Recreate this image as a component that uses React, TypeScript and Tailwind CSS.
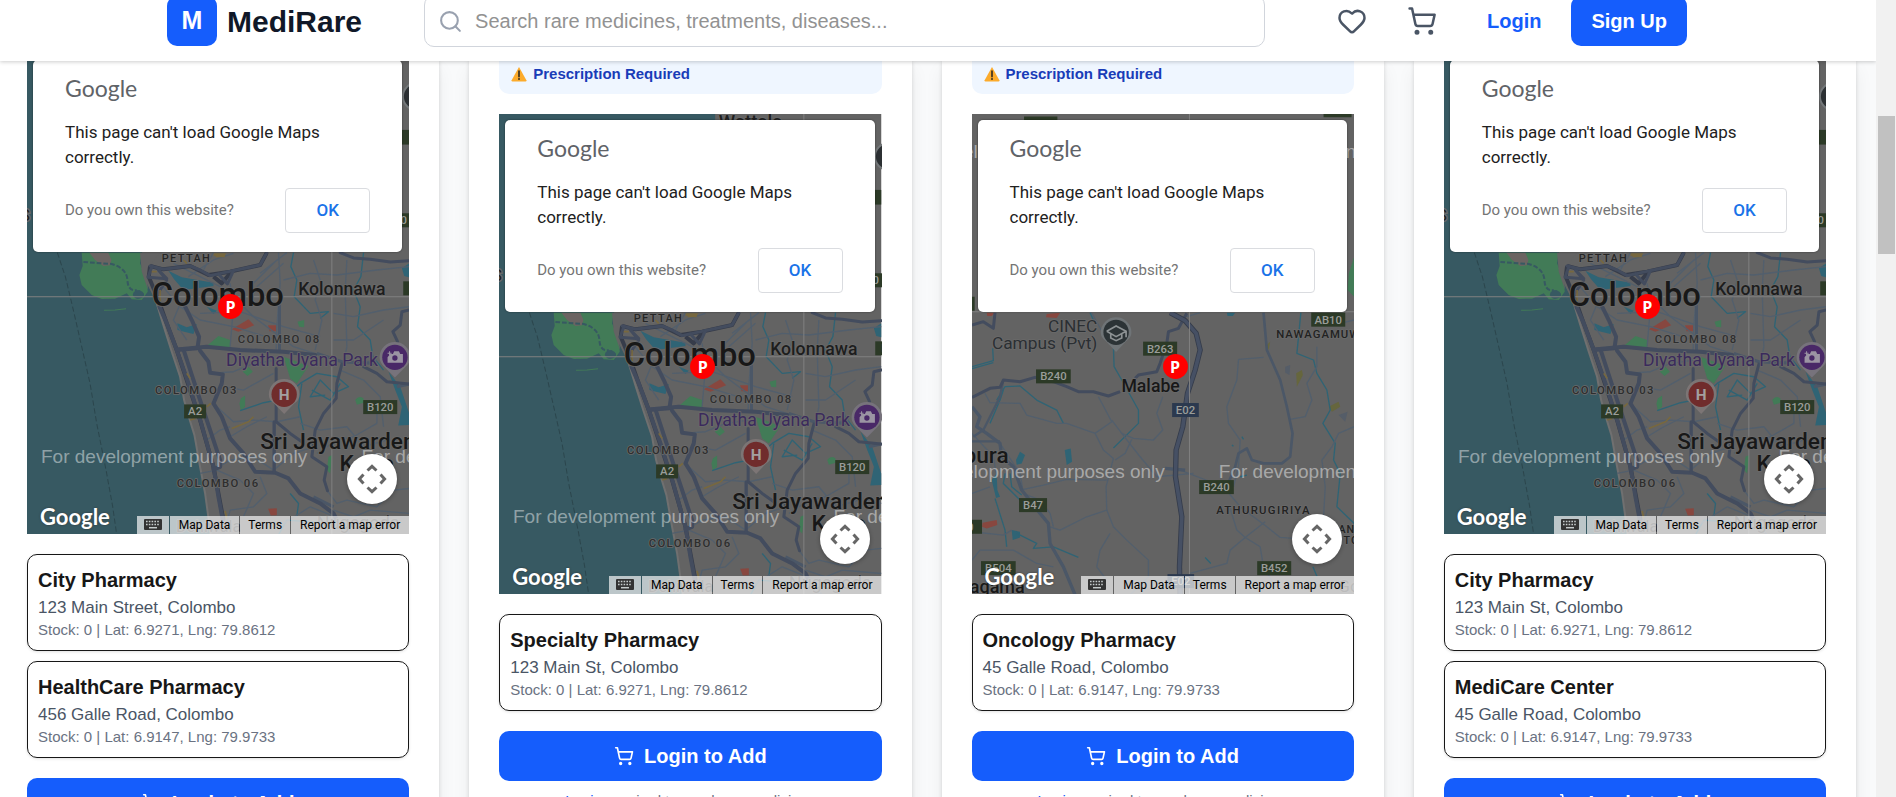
import React from "react";
import { Heart, Search, ShoppingCart } from "lucide-react";

type Pharmacy = {
  name: string;
  address: string;
  lat: string;
  lng: string;
};

type Medicine = {
  id: string;
  region: "colombo" | "malabe";
  prescription: boolean;
  pharmacies: Pharmacy[];
};

const medicines: Medicine[] = [
  {
    id: "m1",
    region: "colombo",
    prescription: false,
    pharmacies: [
      { name: "City Pharmacy", address: "123 Main Street, Colombo", lat: "6.9271", lng: "79.8612" },
      { name: "HealthCare Pharmacy", address: "456 Galle Road, Colombo", lat: "6.9147", lng: "79.9733" },
    ],
  },
  {
    id: "m2",
    region: "colombo",
    prescription: true,
    pharmacies: [{ name: "Specialty Pharmacy", address: "123 Main St, Colombo", lat: "6.9271", lng: "79.8612" }],
  },
  {
    id: "m3",
    region: "malabe",
    prescription: true,
    pharmacies: [{ name: "Oncology Pharmacy", address: "45 Galle Road, Colombo", lat: "6.9147", lng: "79.9733" }],
  },
  {
    id: "m4",
    region: "colombo",
    prescription: false,
    pharmacies: [
      { name: "City Pharmacy", address: "123 Main St, Colombo", lat: "6.9271", lng: "79.8612" },
      { name: "MediCare Center", address: "45 Galle Road, Colombo", lat: "6.9147", lng: "79.9733" },
    ],
  },
];

function Header() {
  return (
    <header className="relative z-10 h-[61px] shrink-0 overflow-visible bg-white pr-[22px] shadow-[0_1px_4px_rgba(0,0,0,0.2)]">
      <div className="mx-auto -mt-[19px] flex h-20 max-w-[1600px] items-center justify-between gap-[62px] px-10">
        <a href="#home" className="flex items-center gap-[10px]">
          <span className="flex size-[50px] items-center justify-center rounded-[10px] bg-[#155dfc] text-[25px] font-bold text-white">
            M
          </span>
          <span className="text-[30px] font-bold text-[#101828]">MediRare</span>
        </a>
        <label className="flex h-[52px] flex-1 items-center gap-[12px] rounded-[10px] border border-[#d1d5dc] bg-white px-[13px]">
          <Search className="size-[25px] shrink-0 text-[#99a1af]" />
          <input
            type="search"
            aria-label="Search"
            placeholder="Search rare medicines, treatments, diseases..."
            className="w-full bg-transparent text-[20px] outline-none placeholder:text-[#929292]"
          />
        </label>
        <nav className="flex items-center gap-5">
          <button type="button" aria-label="Wishlist" className="p-[10px] text-[#4a5565]">
            <Heart className="size-[30px]" />
          </button>
          <button type="button" aria-label="Cart" className="p-[10px] text-[#4a5565]">
            <ShoppingCart className="size-[30px]" />
          </button>
          <div className="flex items-center gap-[10px]">
            <a href="#login" className="px-5 text-[20px] font-bold text-[#155dfc]">
              Login
            </a>
            <a
              href="#signup"
              className="flex h-[50px] items-center rounded-[10px] bg-[#155dfc] px-5 text-[20px] font-bold text-white"
            >
              Sign Up
            </a>
          </div>
        </nav>
      </div>
    </header>
  );
}

type LabelProps = {
  x: number;
  y: number;
  size: number;
  children: string;
  fill?: string;
  weight?: number;
  spacing?: number;
  anchor?: "start" | "middle" | "end";
};

function MapLabel({ x, y, size, children, fill = "#181818", weight = 500, spacing = 0, anchor = "start" }: LabelProps) {
  return (
    <text
      x={x}
      y={y}
      fontSize={size}
      fontWeight={weight}
      fill={fill}
      textAnchor={anchor}
      letterSpacing={spacing}
      stroke="#6a6a6a"
      strokeWidth={5}
      strokeLinejoin="round"
      paintOrder="stroke"
    >
      {children}
    </text>
  );
}

function RoadSign({ x, y, w, label, fill = "#2c3a27" }: { x: number; y: number; w: number; label: string; fill?: string }) {
  return (
    <g>
      <rect x={x} y={y} width={w} height={42} fill={fill} />
      <text x={x + w / 2} y={y + 33} fontSize={34} fontWeight={500} fill="#9a9d99" textAnchor="middle">
        {label}
      </text>
    </g>
  );
}

function Watermark({ x, y }: { x: number; y: number }) {
  return (
    <text x={x} y={y} fontSize={57} fill="#ffffff" fillOpacity={0.46} className="font-['Liberation_Sans',sans-serif]">
      For development purposes only
    </text>
  );
}

function ColomboMap() {
  return (
    <>
      <rect width="382" height="480" fill="#636363" />
      <g transform="translate(-27,186) scale(0.33333)">
        <path d="M81-558H729V-520L600-300L470-60L425 40L440 130L470 190L492 262L515 335L540 410L552 480L566 530L583 585L598 670L615 760L632 884H81Z" fill="#375962" />
        <path d="M470 190L492 262L515 335L540 410L552 480L566 530L583 585L598 670L615 760L632 884" fill="none" stroke="#707070" strokeWidth="6" />
        <path d="M245 38L248 78L238 105L245 135L275 165L305 177L345 176L380 160L395 178L425 180L443 155L440 120L420 70L425 38Z" fill="#427b57" />
        <path d="M268 38L285 60L310 78L330 76L334 60L325 38Z" fill="#6b6462" />
        <path d="M420 38H480L450 75L440 110L444 150L425 95Z" fill="#636363" />
        <path d="M250 66L335 72Q380 85 382 120T410 150" fill="none" stroke="#375962" strokeWidth="6" strokeDasharray="14 6" />
        <path d="M398 165Q400 150 418 150Q440 160 428 172Q408 184 398 165" fill="#375962" />
        <path d="M312 211L345 210L378 206" fill="none" stroke="#427b57" strokeWidth="3" />
        <path d="M172 38L196 110L220 210L245 320L270 430L290 550L318 690L338 800L350 884" fill="none" stroke="#2c464d" strokeWidth="3" strokeDasharray="16 8" />

        <g fill="#2f6475">
          <path d="M505 92L545 112L640 128L640 138L550 150L522 118Z" />
          <path d="M532 250L560 262L590 252L580 282L555 276L532 270Z" />
          <path d="M1205 85L1227 70V112L1212 108Z" />
          <path d="M1165 395L1200 440L1227 520V555L1194 556L1205 500L1185 450Z" />
          <path d="M620 200L650 212L640 222Z" />
        </g>
        <g fill="#427b57">
          <path d="M620 318L655 288L690 300V325Z" />
          <path d="M850 350L925 378L890 430L870 415Z" />
          <path d="M892 245L912 240V262L897 260Z" />
          <path d="M728 395L745 380L758 395L742 408Z" />
          <path d="M722 475L735 466L735 500L722 512L718 490Z" />
          <path d="M1065 480Q1075 465 1090 475V488L1070 494Z" />
          <path d="M985 650L996 645L990 700L980 690Z" />
        </g>
        <g fill="#88473f">
          <path d="M695 268L745 238L762 256L715 275Z" />
          <path d="M804 256H828V274H808Z" />
          <path d="M804 806L830 804V825L812 826Z" />
        </g>

        <g fill="none" stroke="#2f6475" strokeWidth="4" strokeLinejoin="round">
          <path d="M880 38L872 80L890 120L882 170L930 220L985 215L960 235" />
          <path d="M1090 38L1082 110L1060 150L1080 200L1072 260L1110 300L1118 350L1150 390" />
          <path d="M845 480L900 430L950 400L1010 410L1045 440L1000 460L960 420L930 470L975 465" />
          <path d="M905 430L895 500L910 570" />
          <path d="M935 450L990 480L1020 430" />
          <path d="M720 512L790 488L830 480" />
          <path d="M870 760L895 790L890 828" />
          <path d="M835 884L860 840L1000 850" />
        </g>
        <g fill="none" stroke="#525f6d" strokeWidth="4" strokeLinejoin="round">
          <path d="M520 70L600 110L680 150L760 230L880 320L960 345" />
          <path d="M565 110L640 60L700 40M640 38L610 90M760 130L830 60M770 140L850 70M780 100L860 38" />
          <path d="M480 130L540 200L600 240L700 260L830 300" />
          <path d="M545 180L520 240L560 300" />
          <path d="M690 130L700 200L690 320" />
          <path d="M600 220L720 215L850 260L960 290" />
          <path d="M835 38L840 130L830 260L828 330" />
          <path d="M850 120L930 100L1010 105L1130 90L1227 80" />
          <path d="M940 60L960 120L945 180L965 240L945 330" />
          <path d="M1000 220L1060 230L1150 210L1227 200" />
          <path d="M1040 60L1035 150L1040 320L1030 370" />
          <path d="M630 400L700 395L760 370L830 360" />
          <path d="M670 440L730 450L820 400" />
          <path d="M650 500L700 545L760 540L830 545L900 530" />
          <path d="M690 590L740 560L800 530" />
          <path d="M640 690L690 660L760 650L820 690L880 640L940 620" />
          <path d="M620 600L660 570L690 560" />
          <path d="M600 700L650 690L720 720L760 760L730 830" />
          <path d="M780 710L800 760L760 800L690 810L670 884" />
          <path d="M900 550L960 570L1040 560L1090 620L1160 600L1227 610" />
          <path d="M950 640L1010 600L1060 590L1130 550L1130 500" />
          <path d="M1020 390L1090 420L1140 470L1150 560" />
          <path d="M1000 810L1060 830L1110 810L1227 820" />
          <path d="M980 750L1010 790L1040 780L1130 800L1180 750L1227 745" />
          <path d="M850 850L930 800L1000 828L1050 884" />
          <path d="M1150 240L1060 300L1000 300" />
          <path d="M960 350L1060 370L1130 360" />
        </g>
        <g fill="none" stroke="#4b5767" strokeWidth="9" strokeLinejoin="round">
          <path d="M838 170V330" />
          <path d="M822 545V695" />
          <path d="M950 340L1025 365L1130 370" />
          <path d="M1190 440L1227 432" />
          <path d="M940 770L1000 800" />
        </g>
        <g fill="none" stroke="#363c4a" strokeWidth="12" strokeLinejoin="round">
          <path d="M450 78L490 88L570 78L625 105L690 95L780 75L800 38" />
          <path d="M450 78L446 110L475 180L500 250L530 330L560 420L600 540L640 680L670 840" />
          <path d="M640 110L665 130L690 100" />
        </g>
        <g fill="none" stroke="#434c5e" strokeWidth="9" strokeLinejoin="round" strokeLinecap="round">
          <path d="M1020 38L1060 54L1110 58L1170 66L1227 62" />
          <path d="M450 78L490 88L570 78L600 90L630 107L700 92L780 75L800 38" />
          <path d="M456 78L444 112L500 116L475 90L500 120L470 165" />
          <path d="M655 102L682 132L700 92" />
          <path d="M478 200L500 250L530 330L565 430L602 545L640 680L655 770L668 840" strokeWidth="12" />
          <path d="M553 195L575 240L597 290L592 325L530 330" strokeWidth="12" />
          <path d="M550 328L590 450L625 555L660 660L660 680L640 688" strokeWidth="12" />
          <path d="M530 328L620 320L720 330L850 335L945 345" strokeWidth="12" />
          <path d="M600 332L625 365L630 398L668 403L665 430L640 490L665 530L690 595L730 640L765 695L825 698L865 715L900 760L960 790L1000 820L1010 840" strokeWidth="12" />
          <path d="M828 385V545L870 580L905 605" />
          <path d="M822 545V695" />
          <path d="M1025 372L1010 430L1008 475L970 520L945 570L940 610L935 650L980 680L972 720L982 752" />
          <path d="M1227 210L1205 215L1200 255L1178 275L1192 305" />
          <path d="M1090 380L1130 400L1160 425L1227 432" />
        </g>
        <g fill="none" stroke="#77683f" strokeWidth="5">
          <path d="M640 45L675 48M480 150V185M560 400L570 415M620 500L632 490M695 565L745 545L760 530M570 540L585 535M675 812L680 835" />
          <path d="M455 95H470M550 60L560 70" />
        </g>
        <path d="M640 40L678 40L672 52L648 52Z" fill="#77683f" />
        <path d="M81 170H1227M995-558V884" stroke="#818181" strokeWidth="3" />

        <MapLabel x={485} y={67} size={33} spacing={4} fill="#262626">PETTAH</MapLabel>
        <MapLabel x={455} y={197} size={98}>Colombo</MapLabel>
        <MapLabel x={894} y={165} size={53} fill="#1d1d1d">Kolonnawa</MapLabel>
        <MapLabel x={713} y={309} size={34} spacing={4} fill="#2e2e2e">COLOMBO 08</MapLabel>
        <MapLabel x={465} y={461} size={34} spacing={4} fill="#2e2e2e">COLOMBO 03</MapLabel>
        <MapLabel x={530} y={742} size={34} spacing={4} fill="#2e2e2e">COLOMBO 06</MapLabel>
        <MapLabel x={678} y={377} size={53} weight={400} fill="#3b2a5c">Diyatha Uyana Park</MapLabel>
        <MapLabel x={780} y={627} size={68}>Sri Jayawardenepura</MapLabel>
        <MapLabel x={1018} y={694} size={68}>Kotte</MapLabel>
        <MapLabel x={528} y={876} size={48} weight={400} fill="#333333">Dehiwala</MapLabel>
        <MapLabel x={950} y={866} size={54} weight={400} fill="#333333">Nugegoda</MapLabel>
        <MapLabel x={740} y={-516} size={56} fill="#202020">Wattala</MapLabel>
        <RoadSign x={552} y={493} w={66} label="A2" />
        <RoadSign x={1089} y={480} w={102} label="B120" />
        <RoadSign x={1209} y={124} w={60} label="D" />
        <RoadSign x={1160} y={-80} w={80} label="B0" />
        <path d="M1205-330H1227V-286H1205Z" fill="#2c3a27" />

        <path d="M852 522L822 490Q806 480 806 463A46 46 0 0 1 898 463Q898 480 882 490Z" fill="#7c7575" />
        <circle cx="852" cy="463" r="38" fill="#702c2c" />
        <text x="852" y="480" fontSize="46" fontWeight="700" textAnchor="middle" fill="#a3a0a0">
          H
        </text>
        <path d="M1184 412L1152 380Q1138 368 1138 352A46 46 0 0 1 1230 352Q1230 368 1216 380Z" fill="#77737c" />
        <circle cx="1184" cy="352" r="38" fill="#492867" />
        <path d="M1170 342H1178L1182 334H1196L1200 342H1208V368H1162V352" fill="#9b94a3" />
        <circle cx="1184" cy="354" r="8" fill="#492867" />
        <path d="M1162 340H1174M1168 334V346" stroke="#9b94a3" strokeWidth="3" />
        <circle cx="1248" cy="-430" r="40" fill="#2c3033" stroke="#74787a" strokeWidth="6" />
        <text x="60" y="-58" fontSize="50" fill="#202020" stroke="#6a6a6a" strokeWidth="8" paintOrder="stroke">
          S
        </text>
      </g>
      <g transform="translate(-27,186) scale(0.33333)">
        <Watermark x={123} y={670} />
        <Watermark x={1084} y={670} />
      </g>
    </>
  );
}

function MalabeMap() {
  return (
    <>
      <rect width="382" height="480" fill="#636363" />
      <g transform="translate(-32,186) scale(0.33333)">
        <g fill="#2f6475">
          <path d="M374 450L392 445L396 485L380 495Z" />
          <path d="M155 540L170 520L172 570L180 590L168 594Z" />
          <path d="M215 690L240 695L240 712L218 720Z" />
          <path d="M860 38H885L878 48H862Z" />
          <path d="M228 480L240 455L255 465L245 490L230 494Z" />
        </g>
        <g fill="#66663d">
          <path d="M1068 220L1085 210L1088 225L1070 260Z" />
          <path d="M1165 320L1195 305L1200 320L1175 335Z" />
          <path d="M980 135L990 125L985 150Z" />
        </g>
        <path d="M1195 345L1222 335L1215 365Z" fill="#555d68" />
        <path d="M1035 200L1050 195L1048 225L1035 218Z" fill="#555d68" />
        <g fill="#88473f">
          <path d="M320 42L360 38L350 54L318 52Z" />
          <path d="M140 38H165L155 48H142Z" />
          <path d="M128 668L170 660L172 675L140 685L126 680Z" />
        </g>
        <path d="M1242 -130L1226-80L1222-30L1242-10Z" fill="#427b57" />

        <g fill="none" stroke="#2f6475" strokeWidth="4" strokeLinejoin="round">
          <path d="M96 200L160 182L158 145M96 206L160 188" />
          <path d="M520 140L522 200L545 240L595 330L595 370L520 444" />
          <path d="M170 300L195 260L240 258L290 300L350 330L370 370" />
          <path d="M190 270L180 300L150 370" />
          <path d="M1082 38L1070 160L1120 180L1130 220L1160 270L1170 330L1148 370L1185 430L1180 480L1200 520L1190 620L1242 670" />
          <path d="M195 520L190 550L240 600M210 520L215 560L245 585" />
          <path d="M165 595L195 690L200 740" />
          <path d="M230 700L290 730L280 745L340 740L415 772" />
          <path d="M795 772L812 790M1118 800L1130 828M450 38L460 60" />
          <path d="M905 410L910 418M875 435L880 438M900 530L920 525" />
        </g>
        <g fill="none" stroke="#525f6d" strokeWidth="4" strokeLinejoin="round">
          <path d="M135 280L150 308L240 310L260 345L350 370L380 370L465 400L490 450L520 475L498 560L500 630L440 650L360 690L330 680" />
          <path d="M475 290L515 365L465 400M515 360L545 400L600 470L650 530L760 520" />
          <path d="M545 400L580 415L640 420L668 390L650 340L668 290" />
          <path d="M575 418L555 460L525 480" />
          <path d="M895 178L890 240L860 320L865 370L900 420L895 500L880 560" />
          <path d="M895 178L970 172M1130 140L1130 200L1100 250L1115 300L1095 350L1050 358" />
          <path d="M1242 380L1195 400L1175 440L1145 480L1155 560L1150 650" />
          <path d="M720 510L850 560L900 620L980 680L1020 712L1060 715" />
          <path d="M870 625L890 690L915 712L975 665M915 712L870 750L860 790L750 820" />
          <path d="M915 712L960 740L970 800L1000 850" />
          <path d="M500 630L520 680L560 720L625 780L625 830L570 884" />
          <path d="M510 700L480 750L470 800L500 840" />
          <path d="M240 570L310 555L380 538L500 540" />
          <path d="M96 400L160 470L170 530M96 580L150 560" />
          <path d="M96 695L190 705L215 690M96 780L120 750L220 750L290 790L340 800" />
          <path d="M340 680L330 640L300 600L250 580L240 520L180 430" />
          <path d="M450 30L500 120M740 50L780 38M1242 60L1200 70" />
        </g>
        <g fill="none" stroke="#4b5767" strokeWidth="10" strokeLinejoin="round">
          <path d="M96 320L120 350L110 380L140 400L180 430L185 470L220 500L245 570L300 640L325 670L330 730L370 800L405 884" />
          <path d="M190 240L180 290L130 390L100 410M96 424H180" strokeWidth="7" />
          <path d="M970 38L980 150L1020 240L1040 320L1057 400L1050 470L1025 490L970 490L935 480L920 445L895 460L885 500L860 560" strokeWidth="8" />
          <path d="M675 505L735 510" />
        </g>
        <g fill="none" stroke="#434c5e" strokeWidth="9" strokeLinejoin="round">
          <path d="M96 75L130 65L160 85L165 38" />
          <path d="M96 292L150 265L180 262L190 240L240 245L285 232L340 245L380 260L415 275L460 275L505 288L540 275" />
          <path d="M740 40L715 85L685 95L680 130L660 190L650 215L595 225L585 235" />
        </g>
        <path d="M690 38L735 62L768 100L780 150L765 210L742 280L728 380L708 450L706 530L725 650L718 800L720 884" fill="none" stroke="#353c4b" strokeWidth="16" />
        <path d="M690 38L735 62L768 100L780 150L765 210L742 280L728 380L708 450L706 530L725 650L718 800L720 884" fill="none" stroke="#465064" strokeWidth="11" />
        <path d="M96 35H1242M748-558V884" stroke="#818181" strokeWidth="3" />

        <MapLabel x={472} y={95} size={52} weight={400} fill="#2b2f33" anchor="end">CINEC</MapLabel>
        <MapLabel x={472} y={148} size={52} weight={400} fill="#2b2f33" anchor="end">Campus (Pvt)</MapLabel>
        <MapLabel x={544} y={275} size={53}>Malabe</MapLabel>
        <MapLabel x={206} y={490} size={68} anchor="end">Jayawardenepura</MapLabel>
        <MapLabel x={254} y={880} size={54} anchor="end">Maharagama</MapLabel>
        <MapLabel x={1008} y={114} size={34} spacing={3} fill="#222222">NAWAGAMUWA</MapLabel>
        <MapLabel x={828} y={642} size={34} spacing={4} fill="#222222">ATHURUGIRIYA</MapLabel>
        <MapLabel x={1195} y={698} size={32} spacing={3} fill="#222222">ANA</MapLabel>
        <MapLabel x={1210} y={731} size={32} spacing={3} fill="#222222">TOWN</MapLabel>
        <MapLabel x={1195} y={876} size={50} weight={400} fill="#333333">Go</MapLabel>
        <RoadSign x={609} y={125} w={102} label="B263" />
        <RoadSign x={288} y={208} w={104} label="B240" />
        <RoadSign x={777} y={540} w={104} label="B240" />
        <RoadSign x={237} y={594} w={84} label="B47" />
        <RoadSign x={1113} y={38} w={102} label="AB10" />
        <RoadSign x={951} y={783} w={102} label="B452" />
        <RoadSign x={123} y={783} w={104} label="B504" />
        <RoadSign x={56} y={659} w={70} label="0" />
        <RoadSign x={696} y={309} w={80} label="E02" fill="#2b394f" />
        <RoadSign x={682} y={822} w={80} label="E02" fill="#2b394f" />
        <path d="M252-550H352V-530H252ZM1150-558H1234V-548H1150ZM50-10H104V32H50Z" fill="#2c3a27" />

        <path d="M528 156L498 124Q482 112 482 98A46 46 0 0 1 574 98Q574 112 558 124Z" fill="#6f7477" />
        <circle cx="528" cy="97" r="38" fill="#2c3336" />
        <path d="M500 94L528 78L558 94V112M500 94L528 110L558 94M512 102V114L528 122L545 114V102" fill="none" stroke="#8d9294" strokeWidth="5" />
      </g>
      <g transform="translate(-32,186) scale(0.33333)">
        <Watermark x={-124} y={535} />
        <Watermark x={836} y={535} />
        <Watermark x={-124} y={-425} />
        <Watermark x={836} y={-425} />
      </g>
    </>
  );
}

function KeyboardIcon() {
  return (
    <svg viewBox="0 0 18 12" className="h-3 w-[18px]" aria-hidden="true">
      <rect width="18" height="11" rx="1" fill="#333" />
      <path d="M2 2.5H16M2 5.5H16" stroke="#c5cbcc" strokeWidth="1.5" strokeDasharray="1.6 1.2" />
      <path d="M5 8.7H13" stroke="#c5cbcc" strokeWidth="1.5" />
    </svg>
  );
}

function CameraControlIcon() {
  return (
    <svg viewBox="0 0 30 30" className="size-[30px]" fill="none" stroke="#666" strokeWidth="3" aria-hidden="true">
      <path d="M10.5 6.5L15 2.4L19.5 6.5M10.5 23.5L15 27.6L19.5 23.5M6.5 10.5L2.4 15L6.5 19.5M23.5 10.5L27.6 15L23.5 19.5" />
    </svg>
  );
}

function MapPanel({ region }: { region: Medicine["region"] }) {
  return (
    <div className="relative h-[480px] overflow-hidden font-['Roboto',sans-serif]">
      <svg
        viewBox="0 0 382 480"
        preserveAspectRatio="xMidYMid slice"
        className="absolute inset-0 size-full"
        aria-hidden="true"
      >
        {region === "colombo" ? <ColomboMap /> : <MalabeMap />}
      </svg>

      <span className="absolute top-[240px] left-1/2 flex size-[25px] items-center justify-center rounded-full bg-[#ff0000] font-['Open_Sans',sans-serif] text-[16px] font-bold text-white">
        P
      </span>

      <div className="absolute top-[6px] right-[7px] left-[6px] flex h-[192px] flex-col rounded-[5px] bg-white px-8 pt-[14px] shadow-[0_0_2px_rgba(0,0,0,0.5)]">
        <p className="font-['Lato',sans-serif] text-[23px] leading-[28px] text-[#5f6368]">Google</p>
        <p className="mt-[18px] text-[17px] leading-[25px] text-[#212121]">This page can't load Google Maps correctly.</p>
        <div className="mt-[18px] flex items-center justify-between">
          <a href="#maps-help" className="text-[15px] text-[#757575]">
            Do you own this website?
          </a>
          <button
            type="button"
            className="h-[45px] w-[85px] rounded-[4px] border border-[#dadce0] text-[17px] font-medium text-[#1a73e8]"
          >
            OK
          </button>
        </div>
      </div>

      <button
        type="button"
        aria-label="Map camera controls"
        className="absolute right-3 bottom-[30px] flex size-[50px] items-center justify-center rounded-full bg-white shadow-[0_1px_4px_rgba(0,0,0,0.3)]"
      >
        <CameraControlIcon />
      </button>

      <p className="absolute bottom-[3px] left-[13px] font-['Lato',sans-serif] text-[22px] leading-[28px] font-bold text-white [text-shadow:0_0_2px_#333]">
        Google
      </p>

      <div className="absolute right-0 bottom-0 flex h-[18px] text-[12px] leading-[19px] whitespace-nowrap text-black">
        <button type="button" aria-label="Keyboard shortcuts" className="bg-[#f5f5f5]/70 px-[7px]">
          <KeyboardIcon />
        </button>
        <button type="button" className="ml-px bg-[#f5f5f5]/70 px-[9px]">
          Map Data
        </button>
        <a href="#terms" className="ml-px bg-[#f5f5f5]/70 px-2">
          Terms
        </a>
        <a href="#report" className="ml-px bg-[#f5f5f5]/70 px-[9px]">
          Report a map error
        </a>
      </div>
    </div>
  );
}

function WarningIcon() {
  return (
    <svg viewBox="0 0 16 16" className="size-4 shrink-0" aria-hidden="true">
      <path d="M8 1L15.4 14.2Q15.6 15.4 14.5 15.4H1.5Q.4 15.4.6 14.2Z" fill="#fcab2c" />
      <path d="M8 5V10.6" stroke="#3a3020" strokeWidth="1.7" strokeLinecap="round" />
      <circle cx="8" cy="13" r="1" fill="#3a3020" />
    </svg>
  );
}

function MedicineCard({ medicine }: { medicine: Medicine }) {
  return (
    <article className="bg-white px-[30px] shadow-[0_0_4px_rgba(0,0,0,0.14),0_8px_18px_rgba(0,0,0,0.06)]">
      {medicine.prescription ? (
        <div className="mb-5 h-[33px] rounded-b-[10px] bg-[#eff6ff] px-3">
          <p className="flex items-center gap-[6px] pt-[2px] text-[15px] leading-[22px] font-bold text-[#193cb8]">
            <WarningIcon />
            Prescription Required
          </p>
        </div>
      ) : (
        <div className="-mt-[7px]" />
      )}
      <MapPanel region={medicine.region} />
      <ul className="mt-5 flex flex-col gap-[10px]">
        {medicine.pharmacies.map((p) => (
          <li key={p.name} className="rounded-[10px] border border-[#171717] p-[10px] shadow-[0_1px_3px_rgba(0,0,0,0.12)]">
            <h3 className="text-[20px] leading-[30px] font-bold text-[#171717]">{p.name}</h3>
            <p className="text-[17px] leading-[25px] text-[#4a5565]">{p.address}</p>
            <p className="text-[15px] leading-[20px] text-[#6a7282]">
              Stock: 0 | Lat: {p.lat}, Lng: {p.lng}
            </p>
          </li>
        ))}
      </ul>
      <button
        type="button"
        className="mt-5 flex h-[50px] w-full items-center justify-center gap-[10px] rounded-[10px] bg-[#155dfc] text-[20px] font-bold text-white"
      >
        <ShoppingCart className="size-5" />
        Login to Add
      </button>
      <p className="mt-[10px] pb-10 text-center text-[15px] leading-[20px] text-[#6a7282]">
        <a href="#login" className="text-[#155dfc]">
          Login
        </a>{" "}
        required to purchase medicines
      </p>
    </article>
  );
}

export default function App() {
  return (
    <div className="flex h-screen overflow-hidden bg-[#f9fafb] font-['Liberation_Sans',Arial,sans-serif]">
      <div className="flex min-w-0 flex-1 flex-col overflow-hidden">
        <Header />
        <main className="-ml-[3px] grid min-h-0 flex-1 grid-cols-4 gap-[30px] pr-5">
          {medicines.map((m) => (
            <MedicineCard key={m.id} medicine={m} />
          ))}
        </main>
      </div>
      <div className="w-5 shrink-0 bg-[#f1f1f1] px-px pt-[116px]" aria-hidden="true">
        <div className="ml-px h-[138px] bg-[#c1c1c1]" />
      </div>
    </div>
  );
}
